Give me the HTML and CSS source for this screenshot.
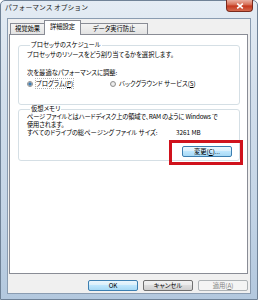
FILE: index.html
```html
<!DOCTYPE html>
<html lang="ja">
<head>
<meta charset="utf-8">
<title>パフォーマンス オプション</title>
<link rel="stylesheet" href="styles.css">
</head>
<body>
<div class="window">
  <div class="titlebar">
    <span class="title">パフォーマンス オプション</span>
    <span class="close"><svg width="8" height="6" viewBox="0 0 8 6"><path d="M1.2 0.6 L6.8 5.4 M6.8 0.6 L1.2 5.4" stroke="#fff" stroke-width="1.6" fill="none"/></svg></span>
  </div>
  <div class="client">
    <div class="tabs">
      <div class="tab t1">視覚効果</div>
      <div class="tab t2 active">詳細設定</div>
      <div class="tab t3">データ実行防止</div>
    </div>
    <div class="panel">
      <fieldset class="group g1">
        <legend>プロセッサのスケジュール</legend>
        <p class="line">プロセッサのリソースをどう割り当てるかを選択します。</p>
        <p class="line sub">次を最適なパフォーマンスに調整:</p>
        <div class="radios">
          <label class="radio"><span class="circle checked"></span><span class="focus">プログラム(<u>P</u>)</span></label>
          <label class="radio"><span class="circle"></span><span>バックグラウンド サービス(<u>S</u>)</span></label>
        </div>
      </fieldset>
      <fieldset class="group g2">
        <legend>仮想メモリ</legend>
        <p class="desc">ページ ファイルとはハードディスク上の領域で、RAM のように Windows で<br>使用されます。</p>
        <div class="size-row"><span>すべてのドライブの総ページング ファイル サイズ:</span><span>3261 MB</span></div>
        <div class="change-row"><button class="btn default">変更(<u>C</u>)...</button></div>
      </fieldset>
    </div>
    <div class="buttons">
      <button class="btn default ok">OK</button>
      <button class="btn">キャンセル</button>
      <button class="btn disabled">適用(<u>A</u>)</button>
    </div>
  </div>
  <div class="highlight"></div>
</div>
</body>
</html>
```
FILE: styles.css
```css
html, body {
  margin: 0;
  padding: 0;
}
body {
  width: 258px;
  height: 300px;
  overflow: hidden;
  font-family: "Noto Sans CJK JP", "Noto Sans", sans-serif;
  font-size: 6.3px;
  font-feature-settings: "palt";
  color: #000;
  background: #fff;
}
.window {
  position: relative;
  box-sizing: border-box;
  width: 258px;
  height: 300px;
  border: 1px solid #6f8297;
  border-radius: 5px 5px 0 0;
  background: linear-gradient(#e4ecf4, #d3dfec 30%, #c3d4e6 70%, #b3c8de);
  padding: 0 6px 5px 6px;
  display: flex;
  flex-direction: column;
}
.titlebar {
  height: 17px;
  margin: 0 -6px;
  padding: 0 4px 0 4px;
  display: flex;
  justify-content: space-between;
  align-items: flex-start;
}
.title {
  font-size: 6.8px;
  line-height: 13px;
  color: #1b1b1b;
  font-feature-settings: normal;
}
.close {
  box-sizing: border-box;
  width: 27px;
  height: 12px;
  margin-top: -1px;
  border: 1px solid #7a2a1c;
  border-top: 0;
  border-radius: 0 0 4px 4px;
  background: linear-gradient(#eab0a2, #d8735b 40%, #c5391f 55%, #d46a4e);
  display: flex;
  align-items: center;
  justify-content: center;
}
.close svg {
  display: block;
}
.client {
  flex: 1;
  box-sizing: border-box;
  background: #f0f0f0;
  border: 1px solid #8a9cb1;
  padding: 1px 2px 0 1px;
  display: flex;
  flex-direction: column;
}
.tabs {
  display: flex;
  align-items: flex-end;
  height: 15px;
  margin-bottom: -1px;
  padding-left: 1px;
  position: relative;
  z-index: 1;
}
.tab {
  box-sizing: border-box;
  height: 11px;
  margin-bottom: 1px;
  border: 1px solid #898c95;
  border-bottom: 0;
  background: linear-gradient(#f3f3f3, #e3e3e3);
  display: flex;
  align-items: center;
  justify-content: center;
  line-height: 8px;
}
.t1 { width: 35px; }
.t2 { width: 37px; margin-left: -1px; }
.t3 { width: 68px; margin-left: -1px; }
.tab.active {
  height: 15px;
  margin-bottom: 0;
  background: #fff;
  padding-bottom: 3px;
  position: relative;
}
.panel {
  height: 240px;
  flex: none;
  box-sizing: border-box;
  background: #fff;
  border: 1px solid #898c95;
  padding: 0 7px 0 8px;
}
.group {
  margin: 0;
  padding: 2px 7px 0 8px;
  border: 1px solid #d5dfe5;
  border-radius: 3px;
  min-width: 0;
}
.group legend {
  padding: 0 1px;
  margin-left: 3px;
  line-height: 8px;
}
.g1 {
  margin-top: 6px;
  padding-bottom: 16px;
}
.g2 {
  margin-top: 0;
  padding-top: 0;
  padding-bottom: 3px;
}
.line {
  margin: 0;
  line-height: 8px;
  white-space: nowrap;
}
.sub {
  margin-top: 10px;
}
.radios {
  margin-top: 2px;
  display: grid;
  grid-template-columns: 83px auto;
  line-height: 9px;
}
.radio {
  display: flex;
  align-items: center;
  gap: 3px;
  white-space: nowrap;
}
.circle {
  box-sizing: border-box;
  width: 6px;
  height: 6px;
  border-radius: 50%;
  border: 1px solid #8f8f8f;
  background: radial-gradient(circle, #f4f4f4, #dcdcdc);
  flex: none;
}
.circle.checked {
  background: radial-gradient(circle, #5aa0d8 0, #1f5f96 1.4px, #e8e8e8 1.8px, #dcdcdc 100%);
}
.focus {
  outline: 1px dotted #b0b0b0;
  outline-offset: 0;
}
.desc {
  margin: 0;
  line-height: 7.5px;
  letter-spacing: -0.2px;
  white-space: nowrap;
}
.size-row {
  margin-top: 1px;
  line-height: 8px;
  display: grid;
  grid-template-columns: 149px auto;
  white-space: nowrap;
}
.change-row {
  margin-top: 9px;
  display: flex;
  justify-content: flex-end;
}
.btn {
  box-sizing: border-box;
  width: 50px;
  height: 11px;
  padding: 0;
  margin: 0;
  font: inherit;
  line-height: 9px;
  color: #000;
  border: 1px solid #707070;
  border-radius: 2px;
  background: linear-gradient(#f2f2f2 0, #ebebeb 45%, #dddddd 50%, #cfcfcf 100%);
  text-align: center;
}
.btn.default {
  border-color: #3c7fb1;
  background: linear-gradient(#eaf6fd 0, #d9f0fc 45%, #bee6fd 50%, #a7d9f5 100%);
}
.btn.disabled {
  border-color: #adb2b5;
  background: #f4f4f4;
  color: #838383;
}
.buttons {
  margin-top: 6px;
  display: flex;
  justify-content: flex-end;
  gap: 5px;
}
.highlight {
  position: absolute;
  left: 168px;
  top: 139px;
  width: 74px;
  height: 25px;
  box-sizing: border-box;
  border: 3px solid #d0121c;
}
```
